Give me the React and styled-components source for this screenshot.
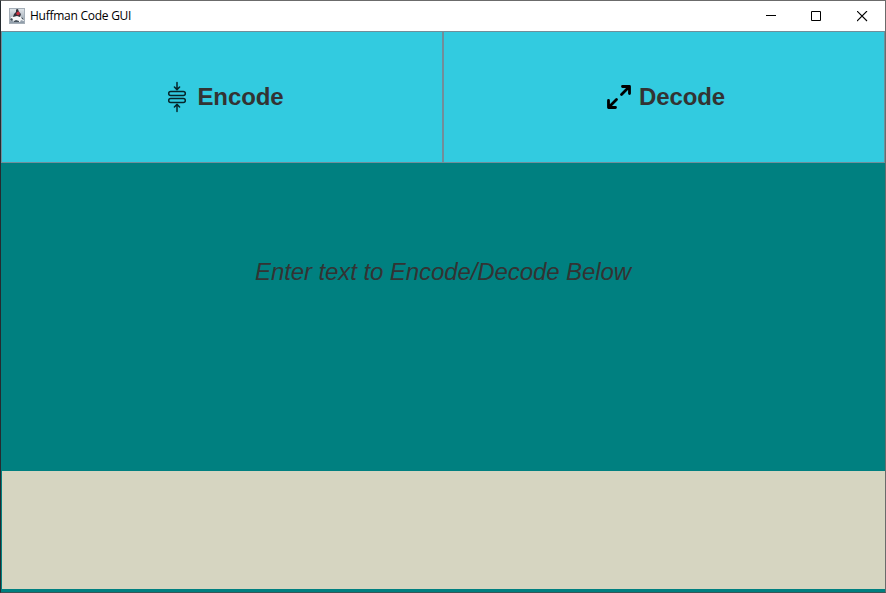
import React from "react";
import styled, { createGlobalStyle } from "styled-components";

const GlobalStyle = createGlobalStyle`
  * { box-sizing: border-box; }
  body { margin: 0; overflow: hidden; background: #262b30; }
`;

const Window = styled.div`
  width: 886px;
  height: 593px;
  display: flex;
  flex-direction: column;
  border: 1px solid #6b6b6b;
  border-left-color: #252b30;
  border-bottom-color: #3d5555;
  background: #008080;
  font-family: "Liberation Sans", Arial, sans-serif;
  color: #333333;
`;

const TitleBar = styled.header`
  display: flex;
  align-items: center;
  height: 30px;
  flex: none;
  padding-left: 8px;
  background: #ffffff;
`;

const Title = styled.h1`
  flex: 1;
  margin: 0 0 0 5px;
  font: 400 12px/16px "Open Sans", "Noto Sans", sans-serif;
  letter-spacing: -0.26px;
  color: #000000;
`;

const WindowButton = styled.button`
  display: flex;
  align-items: center;
  justify-content: center;
  width: ${(p) => p.$width}px;
  height: 29px;
  padding: 0;
  border: 0;
  background: none;
`;

const Actions = styled.div`
  display: grid;
  grid-template-columns: 1fr 1fr;
  height: 132px;
  flex: none;
`;

const ActionButton = styled.button`
  display: flex;
  align-items: center;
  justify-content: center;
  gap: ${(p) => p.$gap}px;
  padding: 0 0 0 ${(p) => p.$shift}px;
  border: 1px solid #718e9a;
  background: #32cbe0;
  font: 700 24px/28px "Liberation Sans", Arial, sans-serif;
  letter-spacing: -0.1px;
  color: #333333;
`;

const Prompt = styled.label`
  display: flex;
  align-items: center;
  justify-content: center;
  height: 308px;
  flex: none;
  padding-bottom: 90px;
  font-size: 24px;
  font-style: italic;
  line-height: 28px;
  letter-spacing: -0.085px;
`;

const TextInput = styled.textarea`
  display: block;
  flex: none;
  height: 118px;
  margin: 0 0 0 1px;
  padding: 4px;
  border: 0;
  outline: 0;
  resize: none;
  background: #d6d5c1;
  font: 24px "Liberation Sans", Arial, sans-serif;
`;

function JavaIcon() {
  return (
    <svg width="16" height="16" viewBox="0 0 16 16">
      <defs>
        <linearGradient id="tile" x1="0" y1="0" x2="0" y2="1">
          <stop offset="0" stopColor="#e2e7eb" />
          <stop offset="1" stopColor="#8b98a5" />
        </linearGradient>
      </defs>
      <rect x=".5" y=".5" width="15" height="15" fill="url(#tile)" stroke="#a5afb8" />
      <path d="M1 12 2 9l4-1h5l4 3v2l-3-1-1 2H5l-1-2-2 1Z" fill="#f5f7f8" />
      <path d="M7 1.5 9 1l1 3 2 2-1 3-3-1-4 1 1-3 2-2Z" fill="#30313a" />
      <path d="m8 4 2-.5L11 6 9 7.5 7 6Z" fill="#c92f40" />
      <path d="m1 11 2-1 1 2-2 1ZM12 9l2 1 1 2-2-1ZM5 13l2-1 3 1v1H5Z" fill="#46515b" />
    </svg>
  );
}

function CompressIcon() {
  return (
    <svg width="20" height="32" viewBox="0 0 20 32" fill="none" stroke="#06262b" strokeWidth="1.5" strokeLinecap="round" strokeLinejoin="round">
      <path d="M10 1.5v6.8M7.4 6 10 8.6 12.6 6M10 30.5v-6.8M7.4 26 10 23.4 12.6 26" />
      <rect x="1.7" y="10.5" width="16.6" height="4" rx="2" />
      <rect x="1.7" y="17.5" width="16.6" height="4" rx="2" />
    </svg>
  );
}

function ExpandIcon() {
  return (
    <svg width="26" height="26" viewBox="0 0 26 26" fill="none" stroke="#000" strokeWidth="2.8" strokeLinecap="round" strokeLinejoin="round">
      <path d="M16.5 2.5h7v7M23 3l-7.5 7.5M9.5 23.5h-7v-7M3 23l7.5-7.5" />
    </svg>
  );
}

export default function App() {
  return (
    <>
      <GlobalStyle />
      <Window>
        <TitleBar>
          <JavaIcon />
          <Title>Huffman Code GUI</Title>
          <WindowButton $width={46} aria-label="Minimize">
            <svg width="11" height="11"><path d="M0 4.5h10" stroke="#000" /></svg>
          </WindowButton>
          <WindowButton $width={45} aria-label="Maximize">
            <svg width="11" height="11"><path d="M.5 .5h9v9h-9Z" fill="none" stroke="#000" /></svg>
          </WindowButton>
          <WindowButton $width={46} aria-label="Close">
            <svg width="11" height="11"><path d="m0 0 10 10M10 0 0 10" stroke="#000" strokeWidth="1.1" /></svg>
          </WindowButton>
        </TitleBar>
        <Actions>
          <ActionButton $gap={10} $shift={7}>
            <CompressIcon />
            Encode
          </ActionButton>
          <ActionButton $gap={7} $shift={3}>
            <ExpandIcon />
            Decode
          </ActionButton>
        </Actions>
        <Prompt htmlFor="message">Enter text to Encode/Decode Below</Prompt>
        <TextInput id="message" />
      </Window>
    </>
  );
}
